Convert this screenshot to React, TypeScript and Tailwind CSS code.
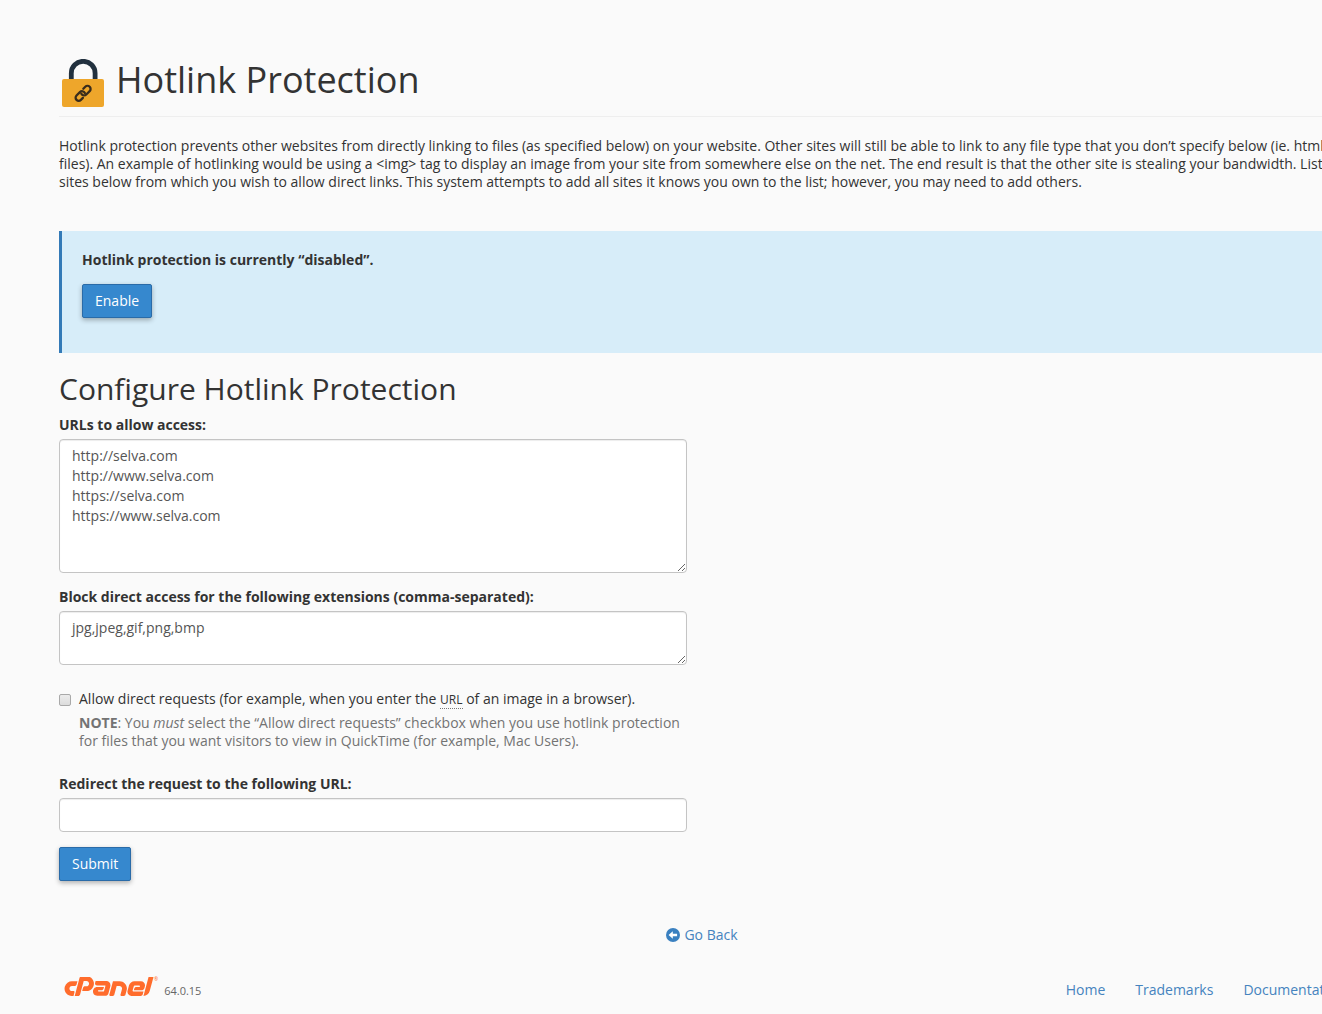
import React from "react";
import { FaCpanel } from "react-icons/fa";

function LockIcon() {
  return (
    <svg viewBox="0 0 48 48" className="size-12 shrink-0" aria-hidden="true">
      <path d="M12.3 22V14.2a11.9 11.9 0 0 1 23.8 0V22" fill="none" stroke="#22313f" strokeWidth="4.8" />
      <rect x="3" y="20" width="42" height="28" rx="2" fill="#eea62b" />
      <g
        transform="translate(24.1 34.3) rotate(-45)"
        fill="none"
        stroke="#3a2c1c"
        strokeWidth="2.3"
        strokeLinecap="round"
      >
        <path d="M-3.4 3.1H-6.2a3.1 3.1 0 0 1 0-6.2H-1.4a3.1 3.1 0 0 1 2.9 4.1" />
        <path d="M3.4-3.1H6.2a3.1 3.1 0 0 1 0 6.2H1.4a3.1 3.1 0 0 1-2.9-4.1" />
      </g>
    </svg>
  );
}

function BackIcon() {
  return (
    <svg viewBox="0 0 14 14" className="size-3.5" aria-hidden="true">
      <circle cx="7" cy="7" r="7" fill="#3a80c0" />
      <path d="M2.6 7 6.8 3.2v2.5h4.3v2.6H6.8v2.5z" fill="#fff" />
    </svg>
  );
}

function PrimaryButton({ children, type = "button" }: { children: React.ReactNode; type?: "button" | "submit" }) {
  return (
    <button
      type={type}
      className="h-[34px] cursor-pointer rounded-xs border border-[#2a6ba8] bg-[#3688ce] px-3 text-white shadow-[0_2px_5px_rgba(0,0,0,0.3)] hover:bg-[#2f79b9]"
    >
      {children}
    </button>
  );
}

const field =
  "block w-full rounded-sm border border-[#c4c4c4] bg-white px-3 py-1.5 leading-5 text-[#555] shadow-[inset_0_1px_1px_rgba(0,0,0,0.075)]";
const label = "mb-[5px] block font-bold";
const link = "text-[#4583be] hover:underline";

export default function App() {
  return (
    <div className="min-h-screen overflow-x-hidden bg-[#fafafa] font-['Open_Sans',sans-serif] text-sm leading-[18px] text-[#333]">
      <div className="-mr-[23px] pt-[59px] pl-[59px]">
        <header className="mb-5 flex items-center gap-[9px] border-b border-[#eee] pb-[9px]">
          <LockIcon />
          <h1 className="pb-1.5 text-4xl leading-10">Hotlink Protection</h1>
        </header>

        <main>
          <p className="mb-10">
            Hotlink protection prevents other websites from directly linking to files (as specified below) on your
            website. Other sites will still be able to link to any file type that you don’t specify below (ie. html
            files). An example of hotlinking would be using a &lt;img&gt; tag to display an image from your site from
            somewhere else on the net. The end result is that the other site is stealing your bandwidth. List all
            sites below from which you wish to allow direct links. This system attempts to add all sites it knows you
            own to the list; however, you may need to add others.
          </p>

          <section className="mb-[19px] border-l-3 border-[#337ab7] bg-[#d7edf9] px-5 pt-5 pb-[35px]">
            <p className="mb-[15px] font-bold">Hotlink protection is currently “disabled”.</p>
            <PrimaryButton>Enable</PrimaryButton>
          </section>

          <h2 className="mb-[11px] text-3xl leading-[33px]">Configure Hotlink Protection</h2>
          <form className="grid grid-cols-2 gap-x-[30px]" onSubmit={(e) => e.preventDefault()}>
            <div>
              <div className="mb-[15px]">
                <label htmlFor="urls" className={label}>
                  URLs to allow access:
                </label>
                <textarea
                  id="urls"
                  rows={6}
                  className={field}
                  defaultValue={"http://selva.com\nhttp://www.selva.com\nhttps://selva.com\nhttps://www.selva.com"}
                />
              </div>
              <div className="mb-[25px]">
                <label htmlFor="extensions" className={label}>
                  Block direct access for the following extensions (comma-separated):
                </label>
                <textarea id="extensions" rows={2} className={field} defaultValue="jpg,jpeg,gif,png,bmp" />
              </div>
              <div className="mb-[25px] flex items-start gap-2">
                <input
                  id="allow"
                  type="checkbox"
                  aria-describedby="allow-note"
                  className="mt-1 size-3 shrink-0 appearance-none rounded-xs border border-[#a9a9a9] bg-linear-to-b from-[#ececec] to-[#dcdcdc] checked:from-[#3688ce] checked:to-[#3688ce]"
                />
                <div>
                  <label htmlFor="allow" className="mb-1.5 block">
                    Allow direct requests (for example, when you enter the{" "}
                    <abbr title="Uniform Resource Locator" className="border-b border-dotted border-[#777] text-xs no-underline">
                      URL
                    </abbr>{" "}
                    of an image in a browser).
                  </label>
                  <p id="allow-note" className="text-[#737373]">
                    <strong>NOTE</strong>: You <em>must</em> select the “Allow direct requests” checkbox when you use
                    hotlink protection for files that you want visitors to view in QuickTime (for example, Mac Users).
                  </p>
                </div>
              </div>
              <div className="mb-[15px]">
                <label htmlFor="redirect" className={label}>
                  Redirect the request to the following URL:
                </label>
                <input id="redirect" type="text" className={field} />
              </div>
              <PrimaryButton type="submit">Submit</PrimaryButton>
            </div>
          </form>

          <div className="mt-[45px] flex justify-center">
            <a href="#back" className="flex items-center gap-1 text-[#4583be] hover:underline">
              <BackIcon />
              Go Back
            </a>
          </div>
        </main>

        <footer className="mt-[33px] flex items-end justify-between pb-3">
          <div className="flex items-end gap-1.5 pl-[5px]">
            <div className="mb-0.5 flex items-start">
              <FaCpanel viewBox="0 184 640 144" className="h-5 w-[90px] text-[#ff6c2c]" title="cPanel" />
              <span className="text-[5px] leading-1 text-[#ff6c2c]">®</span>
            </div>
            <span className="text-[11px] leading-4 text-[#666]">64.0.15</span>
          </div>
          <nav className="flex gap-[30px]">
            <a href="#home" className={link}>
              Home
            </a>
            <a href="#trademarks" className={link}>
              Trademarks
            </a>
            <a href="#documentation" className={link}>
              Documentation
            </a>
          </nav>
        </footer>
      </div>
    </div>
  );
}
